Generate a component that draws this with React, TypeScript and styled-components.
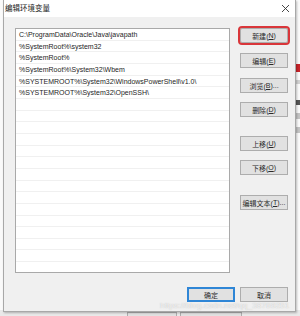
import * as React from 'react';
import styled, { createGlobalStyle } from 'styled-components';

const GlobalStyle = createGlobalStyle`
  html, body {
    margin: 0;
    padding: 0;
    background: #f4f4f4;
  }
  * {
    box-sizing: border-box;
  }
`;

const Desktop = styled.div`
  position: relative;
  width: 300px;
  height: 316px;
  overflow: hidden;
  background: #f2f2f2;
  font-family: 'Liberation Sans', 'Noto Sans CJK SC', sans-serif;
  color: #1a1a1a;
`;

// window behind the dialog, only its right edge and bottom show
const BackWindow = styled.div`
  position: absolute;
  inset: 0;
  display: flex;
  flex-direction: column;
  background: #fafafa;
`;

const BackMain = styled.div`
  flex: 1;
  display: flex;
  justify-content: flex-end;
`;

const RightStrip = styled.div`
  display: flex;
  flex-direction: column;
  gap: 8px;
  width: 4px;
  padding-top: 64px;
`;

const StripMark = styled.div<{ $h: number; $c: string }>`
  height: ${(p) => p.$h}px;
  background: ${(p) => p.$c};
`;

const BottomStrip = styled.div`
  display: flex;
  gap: 3px;
  height: 6px;
  padding-left: 127px;
  background: #e9e9e9;
  overflow: hidden;
`;

const BackButton = styled.div<{ $w: number }>`
  width: ${(p) => p.$w}px;
  height: 8px;
  margin-top: 2px;
  border: 1px solid #adadad;
  border-bottom: none;
  background: #e1e1e1;
  font-size: 7px;
  line-height: 9px;
  text-align: center;
  color: #333;
`;

const Dialog = styled.div`
  position: absolute;
  left: 3px;
  top: 0;
  width: 293px;
  height: 312px;
  display: flex;
  flex-direction: column;
  background: #f0f0f0;
  border: 1px solid #a8a8a8;
  border-top: none;
  box-shadow: 1px 1px 2px rgba(0, 0, 0, 0.25);
`;

const TitleBar = styled.div`
  display: flex;
  align-items: center;
  justify-content: space-between;
  height: 17px;
  padding: 0 5px 0 1px;
  background: #ffffff;
`;

const Title = styled.span`
  font-size: 7.5px;
  color: #222;
  padding-bottom: 2px;
`;

const Body = styled.div`
  display: flex;
  gap: 10px;
  padding: 11px 7px 0 11px;
`;

const PathList = styled.div`
  width: 215px;
  height: 245px;
  background: #fff;
  border: 1px solid #a9a9a9;
  overflow: hidden;
`;

const PathRow = styled.div`
  height: 11.67px;
  line-height: 11px;
  padding-left: 3px;
  font-size: 7px;
  color: #1e1e1e;
  border-bottom: 1px solid #f0f0f0;
  white-space: nowrap;
`;

const ButtonColumn = styled.div`
  display: flex;
  flex-direction: column;
  width: 48px;
`;

const Button = styled.div<{ $top?: number; $primary?: boolean; $marked?: boolean }>`
  display: flex;
  align-items: center;
  justify-content: center;
  height: 15px;
  width: 48px;
  margin-top: ${(p) => p.$top ?? 0}px;
  background: #e1e1e1;
  border: ${(p) => (p.$primary ? '2px solid #2f86d6' : '1px solid #adadad')};
  font-size: 7px;
  color: #2a2a2a;
  white-space: nowrap;
  outline: ${(p) => (p.$marked ? '2px solid #d9363a' : 'none')};
  border-radius: ${(p) => (p.$marked ? '2px' : '0')};
`;

const Key = styled.span`
  text-decoration: underline;
`;

const Footer = styled.div`
  display: flex;
  justify-content: flex-end;
  gap: 5px;
  padding: 14px 7px 0 0;
`;

const Watermark = styled.div`
  position: absolute;
  left: 160px;
  top: 301px;
  font-size: 8px;
  letter-spacing: 0.2px;
  color: rgba(255, 255, 255, 0.75);
  text-shadow: 0 0 1px rgba(120, 120, 120, 0.5);
  white-space: nowrap;
`;

const paths = [
  'C:\\ProgramData\\Oracle\\Java\\javapath',
  '%SystemRoot%\\system32',
  '%SystemRoot%',
  '%SystemRoot%\\System32\\Wbem',
  '%SYSTEMROOT%\\System32\\WindowsPowerShell\\v1.0\\',
  '%SYSTEMROOT%\\System32\\OpenSSH\\',
];

const buttons = [
  { label: '新建', key: 'N', top: 0, marked: true },
  { label: '编辑', key: 'E', top: 10 },
  { label: '浏览', key: 'B', top: 10, dots: true },
  { label: '删除', key: 'D', top: 9 },
  { label: '上移', key: 'U', top: 19 },
  { label: '下移', key: 'O', top: 9 },
  { label: '编辑文本', key: 'T', top: 20, dots: true },
];

function CloseIcon() {
  return (
    <svg width="9" height="9" viewBox="0 0 9 9">
      <path d="M1 1 L8 8 M8 1 L1 8" stroke="#333" strokeWidth="0.9" fill="none" />
    </svg>
  );
}

export default function App() {
  const rows: Array<JSX.Element> = [];
  for (let i = 0; i < 21; i++) {
    rows.push(<PathRow key={'row' + i}>{paths[i] || ''}</PathRow>);
  }

  return (
    <Desktop>
      <GlobalStyle />
      <BackWindow>
        <BackMain>
          <RightStrip>
            <StripMark $h={8} $c="#c8242a" />
            <StripMark $h={4} $c="#d2d2d2" />
            <StripMark $h={0} $c="transparent" />
            <StripMark $h={5} $c="#555" />
            <StripMark $h={6} $c="#c4c4c4" />
            <StripMark $h={6} $c="#c4c4c4" />
          </RightStrip>
        </BackMain>
        <BottomStrip>
          <BackButton $w={50} />
          <BackButton $w={62} />
        </BottomStrip>
      </BackWindow>
      <Dialog>
        <TitleBar>
          <Title>编辑环境变量</Title>
          <CloseIcon />
        </TitleBar>
        <Body>
          <PathList>{rows}</PathList>
          <ButtonColumn>
            {buttons.map((b) => (
              <Button key={b.key} $top={b.top} $marked={b.marked}>
                {b.label}(<Key>{b.key}</Key>){b.dots ? '...' : ''}
              </Button>
            ))}
          </ButtonColumn>
        </Body>
        <Footer>
          <Button $primary>确定</Button>
          <Button>取消</Button>
        </Footer>
      </Dialog>
      <Watermark>https://blog.csdn.net/qq_38769251</Watermark>
    </Desktop>
  );
}
